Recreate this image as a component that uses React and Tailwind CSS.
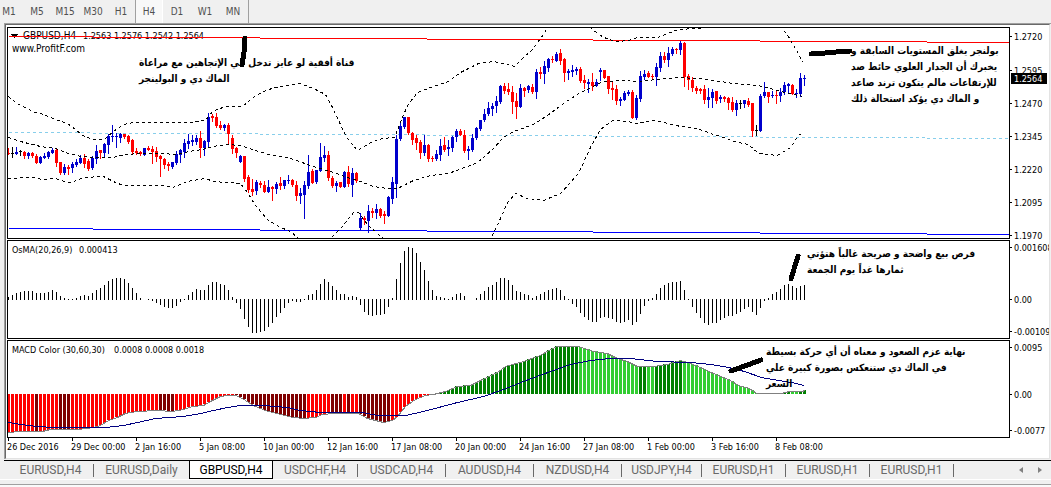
import React, { useState } from "react";

// one candle per 4px: colour, then high, top, bottom, low
const candleData = `
r148,153,154,154 k147,153,153,157 b147,152,154,154 k150,151,151,155 r151,152,156,158 b152,153,156,158 r152,153,156,157 r154,156,163,163
b156,157,163,163 b153,156,158,158 b151,152,157,158 b148,150,153,153 r149,150,163,166 r162,162,173,174 b164,167,173,174 r165,167,169,174
b162,164,168,172 b159,162,165,166 b155,158,163,163 r154,158,164,167 r159,161,169,170 b156,158,168,169 b145,151,159,163 r150,150,153,158
b143,144,153,157 b134,136,145,153 b125,136,137,141 b133,136,137,147 b133,134,138,142 r134,134,137,138 r135,136,142,143 r139,140,152,153
r148,151,153,154 r151,152,154,155 b148,148,155,155 r146,148,150,150 r146,149,152,163 r147,151,157,161 r155,156,159,176 r158,159,165,168
r162,164,166,170 b162,162,167,168 b151,154,163,164 b149,150,155,162 b139,143,152,157 b134,141,144,148 b135,140,142,145 b135,138,142,144
r131,138,148,157 b140,141,148,155 b113,117,142,146 r114,116,118,121 r113,117,126,127 r121,125,128,129 b124,125,128,130 r123,125,134,143
r135,138,149,153 r147,148,153,157 b155,156,162,162 r156,156,179,181 r175,177,190,192 r179,189,192,195 b180,182,191,194 r181,183,185,187
r181,185,192,192 b180,187,192,192 r186,187,189,200 b182,184,189,193 r177,183,186,189 b180,180,186,188 b175,180,181,183 r179,180,185,186
r181,185,196,200 b188,193,196,203 b181,185,195,218 b155,172,186,188 r169,171,183,183 b170,170,182,183 b143,157,171,171 b146,155,158,161
r151,155,178,180 r176,178,186,187 b181,183,186,191 r182,182,187,187 b171,172,187,187 r166,172,184,186 b168,173,185,196 r172,173,181,182
b213,218,228,229 r216,218,220,224 b205,211,221,232 r208,211,213,217 b204,209,213,218 r208,209,216,217 r211,214,216,223 b196,197,216,216
b177,182,199,203 b135,139,184,197 b122,126,139,140 b117,117,127,128 r117,117,133,134 r132,133,140,144 r135,138,143,149 r140,142,153,158
b135,145,153,155 r144,145,159,161 r156,158,159,161 b150,154,159,160 b139,146,155,160 r137,145,150,151 b140,147,149,155 b136,137,148,151
b129,131,137,141 r129,131,135,135 r130,135,151,152 b146,149,151,159 b134,138,150,151 b127,128,138,139 b120,120,129,130 b109,114,120,121
b102,108,114,115 b103,106,109,115 b96,101,106,112 b85,86,102,103 r83,86,91,93 r83,89,92,94 r86,92,102,113 r93,101,107,118
b84,88,107,107 r87,88,91,96 b85,86,90,92 r84,87,92,93 b69,72,92,98 r67,72,74,78 b61,66,74,83 b58,59,68,71
r56,59,60,62 b52,54,61,61 r49,53,61,64 r58,59,73,81 b69,71,73,79 b65,70,72,76 b67,69,71,74 r67,69,81,82
r75,80,83,88 b79,82,84,92 r73,82,86,90 b79,82,86,86 b68,70,72,80 r70,70,78,78 r76,76,89,93 r82,88,90,99
r85,89,101,104 b97,99,101,105 b91,93,100,100 b90,92,94,95 r90,92,118,118 b95,98,118,119 b71,76,99,101 b70,74,77,79
r71,73,77,77 r74,76,77,78 b63,67,77,85 b52,56,68,71 r52,56,60,62 b47,53,60,66 b47,49,54,55 r48,49,50,53
b41,43,50,54 r42,43,77,86 r74,76,80,89 r77,80,88,91 r86,88,91,93 r88,89,91,93 r85,89,100,103 b88,97,100,107
b89,92,98,107 r91,91,101,103 b95,97,99,102 r96,97,99,101 r97,98,103,109 r97,102,110,111 b100,103,110,115 k100,103,103,108
b100,100,104,107 r98,101,105,106 r103,103,131,136 k125,130,130,135 b94,96,131,131 b82,92,96,97 r92,92,97,102 b91,95,96,97
r90,95,96,103 b88,92,96,101 b82,85,92,94 b83,84,86,92 r84,85,94,94 b89,93,94,97 b73,78,94,96 b75,78,79,85
`;

const candleColors = { r: "#ff0000", b: "#0000cc", k: "#000000" };

const candles = candleData
  .trim()
  .split(/\s+/)
  .map((c) => {
    const [high, top, bottom, low] = c.slice(1).split(",").map(Number);
    return { color: candleColors[c[0]], high, top, bottom, low };
  });

// Bollinger bands
const bands = [
  "8,96 15,102 32,111 43,114 58,120 67,123 75,129 82,135 92,139 104,139 113,131 123,124 133,122 173,122 188,122 205,120 212,111 225,106 242,106 255,95 268,89 280,86 300,83 315,89 325,94 332,107 346,137 357,150 370,142 382,138 394,137 400,122 407,105 417,92 430,87 448,81 460,72 478,63 493,61 503,63 514,66 523,57 532,49 540,38 545,31 549,20",
  "586,22 592,29 600,35 608,39 617,41 628,40 637,37 657,37 670,32 678,29 695,28 702,28 712,20",
  "777,20 783,30 788,36 792,43 798,53 802,62",
  "8,137 20,141 40,146 55,148 65,152 80,156 95,157 112,157 125,154 140,153 160,153 177,154 188,151 202,149 212,146 227,144 240,145 255,150 268,154 290,158 313,166 333,172 347,177 360,181 373,186 387,188 397,188 413,180 430,175 448,173 467,166 477,162 493,148 503,137 513,131 533,124 547,115 563,103 580,92 603,81 622,80 637,81 657,79 677,77 698,78 720,81 733,83 757,85 767,87 780,91 793,94 803,96",
  "8,178 32,177 42,179 55,178 67,182 73,181 83,177 103,176 115,182 123,185 143,185 163,185 172,187 187,181 205,178 213,181 240,183 247,192 255,205 267,219 278,226 290,231 297,237 300,241",
  "328,241 331,237 342,226 353,212 358,212 367,224 377,233 386,241",
  "489,241 491,237 500,218 507,202 515,193 527,198 543,200 560,193 578,173 590,147 600,129 612,120 627,121 637,123 655,120 680,126 697,128 710,133 723,137 733,141 748,144 758,153 777,155 790,147 798,135 803,132",
];

const osma = [
  3, 5, 7, 8, 9, 9, 9, 7, 7, 7, 8, 10, 8, 4, 2, 1, 1, 2, 4, 5, 4, 7, 10, 12, 15, 19, 21, 22, 22, 21, 17, 12, 7, 2, 0, 1,
  -2, -4, -6, -8, -9, -9, -7, -3, 1, 5, 8, 11, 10, 10, 15, 18, 18, 16, 15, 10, 3, -4, -10, -20, -28, -34, -34, -33, -32,
  -28, -24, -18, -14, -9, -4, -2, -3, -3, 1, 5, 6, 10, 16, 21, 18, 14, 10, 6, 6, 3, 4, 3, -6, -13, -16, -17, -16, -16,
  -15, -8, 2, 21, 37, 49, 53, 52, 47, 38, 30, 19, 10, 4, 3, 2, 1, 3, 6, 7, 4, 0, 0, 2, 6, 9, 13, 15, 18, 22, 22, 20, 15,
  9, 8, 6, 5, 2, 4, 6, 8, 10, 11, 12, 10, 4, 1, -5, -8, -14, -18, -21, -23, -23, -19, -18, -19, -20, -23, -24, -23, -21,
  -26, -23, -15, -7, -2, 2, 6, 12, 15, 17, 18, 18, 19, 10, 1, -8, -14, -19, -24, -26, -24, -24, -21, -19, -17, -17, -15,
  -13, -10, -8, -13, -16, -9, -2, 2, 6, 8, 11, 15, 16, 14, 12, 14, 15,
];

const macdLine = [
  [8, 432], [19, 431], [42, 431], [50, 429], [78, 429], [93, 427], [100, 425], [108, 420], [117, 417], [125, 413],
  [137, 411], [157, 410], [172, 411], [183, 409], [192, 406], [203, 405], [212, 400], [220, 396], [228, 395], [235, 395],
  [242, 398], [248, 402], [255, 406], [265, 410], [280, 414], [293, 417], [303, 418], [315, 417], [322, 414], [333, 413],
  [358, 413], [367, 418], [383, 422], [392, 420], [397, 416], [405, 406], [415, 399], [425, 395], [433, 394], [445, 391],
  [457, 386], [470, 385], [480, 380], [497, 372], [505, 366], [523, 361], [540, 355], [550, 349], [557, 346], [578, 346],
  [593, 351], [607, 353], [617, 358], [627, 361], [637, 366], [653, 366], [667, 364], [680, 360], [690, 363], [700, 367],
  [713, 373], [730, 380], [738, 385], [749, 388], [756, 393], [781, 393], [789, 391], [801, 391], [805, 390],
];

const signalLine =
  "8,422 20,424 37,426 53,427 105,427 123,425 137,422 155,418 183,416 200,413 213,410 227,407 240,405 263,405 287,407 300,410 320,412 362,412 377,415 405,415 423,411 457,402 483,396 503,389 523,381 550,371 570,364 590,360 610,358 630,358 657,361 690,362 711,364 728,367 744,371 761,377 778,380 791,382 804,385";

// [first bar, colour]
const macdColors = [
  [0, "#ff0000"], [7, "#800000"], [8, "#ff0000"], [13, "#800000"], [16, "#ff0000"], [38, "#800000"], [42, "#ff0000"],
  [57, "#800000"], [75, "#ff0000"], [81, "#800000"], [84, "#ff0000"], [85, "#800000"], [86, "#ff0000"], [88, "#800000"],
  [96, "#ff0000"], [107, "#008000"], [143, "#32cd32"], [158, "#008000"], [160, "#32cd32"], [162, "#008000"],
  [169, "#32cd32"], [194, "#008000"], [196, "#32cd32"], [198, "#008000"],
];

const dates = [
  "26 Dec 2016", "29 Dec 00:00", "2 Jan 16:00", "5 Jan 08:00", "10 Jan 00:00", "12 Jan 16:00", "17 Jan 08:00",
  "20 Jan 00:00", "24 Jan 16:00", "27 Jan 08:00", "1 Feb 00:00", "3 Feb 16:00", "8 Feb 08:00",
];

const timeframes = ["M1", "M5", "M15", "M30", "H1", "H4", "D1", "W1", "MN"];

const tabs = [
  { name: "EURUSD,H4", width: "w-[90px] pl-1" },
  { name: "EURUSD,Daily", width: "w-[95px]" },
  { name: "GBPUSD,H4", width: "w-[84px]" },
  { name: "USDCHF,H4", width: "w-[85px]" },
  { name: "USDCAD,H4", width: "w-[88px]" },
  { name: "AUDUSD,H4", width: "w-[88px]" },
  { name: "NZDUSD,H4", width: "w-[88px]" },
  { name: "USDJPY,H4", width: "w-[80px]" },
  { name: "EURUSD,H1", width: "w-[84px]" },
  { name: "EURUSD,H1", width: "w-[84px]" },
  { name: "EURUSD,H1", width: "w-[84px]" },
];

const barX = (i) => 8 + i * 4;

const macdAt = (x) => {
  const n = macdLine.findIndex((p) => p[0] >= x);
  if (n <= 0) return macdLine[0][1];
  const [x1, y1] = macdLine[n - 1];
  const [x2, y2] = macdLine[n];
  return Math.round(y1 + ((y2 - y1) * (x - x1)) / (x2 - x1));
};

const macdColor = (i) => macdColors.filter((c) => c[0] <= i).pop()[1];

// Channel lines drop one pixel at every step
const channel = (y) =>
  `M8 ${y}H92M92 ${y + 1}H259M259 ${y + 2}H426M426 ${y + 3}H592M592 ${y + 4}H759M759 ${y + 5}H926M926 ${y + 6}H3000`;

const Panel = ({ height, top, axis, children, notes, axisExtra }) => (
  <div className="flex">
    <div className={`relative min-w-0 flex-1 overflow-hidden border border-black ${height}`}>
      <svg className="block h-full w-full" shapeRendering="crispEdges">
        <g transform={`translate(-8 ${-top})`}>{children}</g>
      </svg>
      {notes}
    </div>
    <svg className={`block w-[39px] shrink-0 overflow-hidden ${height}`} shapeRendering="crispEdges">
      <g transform={`translate(0 ${1 - top})`}>
        {axis.map(([label, y]) => (
          <g key={label}>
            <rect x="0" y={y} width="2" height="1" />
            <text x="4" y={y + 4}>{label}</text>
          </g>
        ))}
        {axisExtra}
      </g>
    </svg>
  </div>
);

const Note = ({ lines, place }) => (
  <p
    dir="rtl"
    lang="ar"
    className={`absolute text-left font-['DejaVu_Sans_Condensed','DejaVu_Sans',sans-serif] text-[10px] leading-4 font-bold whitespace-nowrap ${place}`}
  >
    {lines.map((line) => (
      <span key={line} className="block">{line}</span>
    ))}
  </p>
);

const App = () => {
  const [timeframe, setTimeframe] = useState("H4");
  const [activeTab, setActiveTab] = useState(2);

  return (
    <div className="bg-[#f0f0f0] font-['DejaVu_Sans_Condensed','Open_Sans',sans-serif] text-[9px] text-black">
      {/* Timeframes */}
      <header className="flex h-[23px] overflow-hidden">
        <div className="-ml-[5px] flex border-r border-[#a0a0a0] pr-[1px]">
          {timeframes.map((t) => (
            <button
              key={t}
              onClick={() => setTimeframe(t)}
              className={
                t === timeframe
                  ? "w-7 border-x border-l-[#a0a0a0] border-r-white bg-[#f8f8f8] text-[10px] text-[#505050]"
                  : "w-7 text-[10px] text-[#505050]"
              }
            >
              {t}
            </button>
          ))}
        </div>
      </header>

      {/* Chart window */}
      <main className="ml-1 border-t border-l border-[#a0a0a0]">
        <div className="mr-px border-t border-r border-b border-l border-t-[#696969] border-r-[#e3e3e3] border-b-[#e3e3e3] border-l-[#696969] bg-white pt-[2px] pl-px">
          <div className="space-y-px">
            <Panel
              height="h-[212px]"
              top={28}
              axis={[["1.2720", 36], ["1.2595", 70], ["1.2470", 103], ["1.2345", 136], ["1.2220", 169], ["1.2095", 202], ["1.1970", 235]]}
              axisExtra={
                <>
                  <rect x="1" y="73" width="36" height="11" />
                  <text x="4" y="82" fill="#ffffff">1.2564</text>
                </>
              }
              notes={
                <>
                  <Note place="top-[27px] left-[131px]" lines={["قناة أفقية لو عايز تدخل في الإتجاهين مع مراعاة", "الماك دي و البولينجر"]} />
                  <Note
                    place="top-[15px] left-[843px]"
                    lines={["بولنجر يغلق المستويات السابقة و", "يخبرك أن الجدار العلوي حائط صد", "للإرتفاعات مالم يتكون ترند صاعد", "و الماك دي يؤكد استحالة ذلك"]}
                  />
                </>
              }
            >
              <path d="M11 34h7l-3 4h-1z" />
              <text x="23" y="39" className="text-[10px]">GBPUSD,H4</text>
              <text x="83" y="39">1.2563 1.2576 1.2542 1.2564</text>
              <text x="12" y="52" className="text-[10px]">www.ProfitF.com</text>
              <g transform="translate(0.5 0.5)" fill="none">
                <path d={channel(132)} stroke="#87ceeb" strokeDasharray="3 3" />
                <path d={channel(36)} stroke="#ff0000" />
                <path d={channel(228)} stroke="#0000ff" />
              </g>
              {candles.map((c, i) => (
                <g key={i} fill={c.color}>
                  <rect x={barX(i)} y={c.high} width="1" height={c.low - c.high + 1} />
                  <rect x={barX(i) - 1} y={c.top} width="3" height={Math.max(1, c.bottom - c.top)} />
                </g>
              ))}
              <g transform="translate(0.5 0.5)" fill="none" stroke="#000000" strokeDasharray="3 3">
                {bands.map((b) => (
                  <polyline key={b} points={b} />
                ))}
              </g>
              <g fill="none" stroke="#000000" strokeWidth="5" strokeLinecap="round" strokeLinejoin="round">
                <path d="M245 38L244 52L242 65" />
                <path d="M811 54L825 53L836 52L850 51" />
              </g>
            </Panel>

            <Panel
              height="h-[99px]"
              top={241}
              axis={[["0.001608", 247], ["0.00", 299], ["-0.00109", 331]]}
              notes={<Note place="top-[5px] left-[799px]" lines={["فرص بيع واضحة و صريحة غالباً هتؤتي", "ثمارها غداً يوم الجمعة"]} />}
            >
              <text x="12" y="253">OsMA(20,26,9)</text>
              <text x="79" y="253">0.000413</text>
              {osma.map((v, i) => (
                <rect key={i} x={barX(i)} y={v > 0 ? 300 - v : 299} width="1" height={Math.abs(v)} />
              ))}
              <path d="M798 256L791 279" stroke="#000000" strokeWidth="5" strokeLinecap="round" />
            </Panel>

            <Panel
              height="h-[98px]"
              top={341}
              axis={[["0.0095", 347], ["0.00", 394], ["-0.0077", 430]]}
              notes={
                <Note
                  place="top-[3px] left-[758px]"
                  lines={["نهاية عزم الصعود و معناه أن أي حركة بسيطة", "في الماك دي ستنعكس بصورة كبيرة علي", "السعر"]}
                />
              }
            >
              <text x="12" y="353">MACD Color (30,60,30)</text>
              <text x="114" y="353">0.0008 0.0008 0.0018</text>
              {osma.map((_, i) => {
                const y = macdAt(barX(i));
                return (
                  <rect key={i} x={barX(i) - 1} y={Math.min(y, 394)} width="3" height={Math.abs(y - 394)} fill={macdColor(i)} />
                );
              })}
              <g transform="translate(0.5 0.5)" fill="none">
                <polyline points={macdLine.map((p) => p.join(",")).join(" ")} stroke="#808080" />
                <polyline points={signalLine} stroke="#000080" />
              </g>
              <path d="M731 371L761 360" stroke="#000000" strokeWidth="5" strokeLinecap="round" />
            </Panel>
          </div>

          <svg className="block h-5 w-full" shapeRendering="crispEdges">
            {dates.map((d, i) => (
              <g key={d}>
                <rect x={1 + i * 64} y="0" width="1" height="3" />
                <text x={i * 64} y="12">{d}</text>
              </g>
            ))}
          </svg>
        </div>
      </main>

      {/* Chart tabs */}
      <nav className="mt-px ml-1 flex h-[19px] items-stretch border-t border-black text-[#696969]">
        {tabs.map((tab, i) => (
          <button
            key={i}
            onClick={() => setActiveTab(i)}
            className={`flex shrink-0 items-center justify-center font-['Roboto'] text-xs ${tab.width} ${
              i === activeTab ? "border-x border-b border-black bg-white text-black" : ""
            }`}
          >
            <span className="flex-1 text-center">{tab.name}</span>
            {i !== activeTab && i + 1 !== activeTab && <span className="h-[13px] w-px bg-[#696969]" />}
          </button>
        ))}
        <div className="ml-auto flex items-center gap-[15px] pr-[9px]">
          <button aria-label="Scroll left">
            <svg width="4" height="6"><path d="M4 0v6L0 3z" fill="#808080" /></svg>
          </button>
          <button aria-label="Scroll right">
            <svg width="4" height="6"><path d="M0 0v6l4-3z" fill="#808080" /></svg>
          </button>
        </div>
      </nav>
      <div className="h-[5px] border-t border-white" />
      <footer className="h-[3px] border-t border-[#a0a0a0] bg-[#fafafa]" />
    </div>
  );
};

export default App;
